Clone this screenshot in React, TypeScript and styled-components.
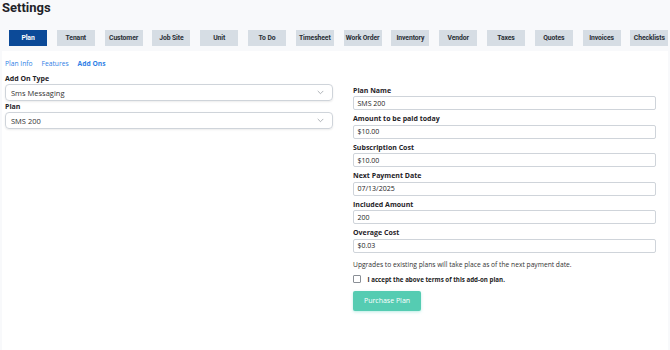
import React from "react";
import styled, { createGlobalStyle } from "styled-components";

const GlobalStyle = createGlobalStyle`
  html, body {
    margin: 0;
    padding: 0;
    background: #f8f9fb;
    font-family: "Open Sans", "Liberation Sans", sans-serif;
    color: #222;
  }
  * { box-sizing: border-box; }
`;

const tabs = [
  "Plan",
  "Tenant",
  "Customer",
  "Job Site",
  "Unit",
  "To Do",
  "Timesheet",
  "Work Order",
  "Inventory",
  "Vendor",
  "Taxes",
  "Quotes",
  "Invoices",
  "Checklists",
];

const fields = [
  { label: "Plan Name", value: "SMS 200" },
  { label: "Amount to be paid today", value: "$10.00" },
  { label: "Subscription Cost", value: "$10.00" },
  { label: "Next Payment Date", value: "07/13/2025" },
  { label: "Included Amount", value: "200" },
  { label: "Overage Cost", value: "$0.03" },
];

const Chevron = () => (
  <svg width="7" height="5" viewBox="0 0 7 5" fill="none">
    <path d="M1 1.2l2.5 2.5 2.5-2.5" stroke="#9aa0a6" strokeWidth="0.8" strokeLinecap="round" strokeLinejoin="round" />
  </svg>
);

const App = () => {
  return (
    <Page>
      <GlobalStyle />
      <Header>
        <Title>Settings</Title>
        <TabBar>
          {tabs.map((t) => (
            <Tab key={t} active={t === "Plan"}>
              {t}
            </Tab>
          ))}
        </TabBar>
      </Header>
      <Panel>
        <SubTabs>
          <SubTab>Plan Info</SubTab>
          <SubTab>Features</SubTab>
          <SubTab active>Add Ons</SubTab>
        </SubTabs>
        <Columns>
          <LeftCol>
            <Label>Add On Type</Label>
            <Select>
              <span>Sms Messaging</span>
              <Chevron />
            </Select>
            <Label>Plan</Label>
            <Select>
              <span>SMS 200</span>
              <Chevron />
            </Select>
          </LeftCol>
          <RightCol>
            {fields.map((f) => (
              <Field key={f.label}>
                <Label>{f.label}</Label>
                <Input>{f.value}</Input>
              </Field>
            ))}
            <Notice>Upgrades to existing plans will take place as of the next payment date.</Notice>
            <CheckRow>
              <Box />
              <CheckText>I accept the above terms of this add-on plan.</CheckText>
            </CheckRow>
            <Button>Purchase Plan</Button>
          </RightCol>
        </Columns>
      </Panel>
    </Page>
  );
};

export default App;

const Page = styled.div`
  width: 670px;
  height: 350px;
  display: flex;
  flex-direction: column;
  background: #f8f9fb;
  overflow: hidden;
`;

const Header = styled.div`
  height: 51px;
  padding: 0 0 0 2px;
`;

const Title = styled.div`
  font-family: Roboto, "Liberation Sans", sans-serif;
  font-weight: 700;
  font-size: 13px;
  line-height: 16px;
  color: #1f2328;
`;

const TabBar = styled.div`
  display: flex;
  gap: 9.8px;
  margin-top: 14px;
  padding-left: 7px;
`;

const Tab = styled.div<{ active?: boolean }>`
  width: 38px;
  height: 16px;
  flex: none;
  display: flex;
  align-items: center;
  justify-content: center;
  font-family: Roboto, "Liberation Sans", sans-serif;
  font-weight: 700;
  font-size: 6.8px;
  letter-spacing: -0.1px;
  white-space: nowrap;
  color: ${(p) => (p.active ? "#ffffff" : "#2a2f36")};
  background: ${(p) => (p.active ? "#0c4a98" : "#d6dde4")};
`;

const Panel = styled.div`
  flex: 1;
  margin-left: 2px;
  width: 666px;
  background: #ffffff;
  padding: 8px 12px 0 3px;
`;

const SubTabs = styled.div`
  display: flex;
  gap: 9px;
  height: 9px;
  align-items: center;
`;

const SubTab = styled.span<{ active?: boolean }>`
  font-size: 6.7px;
  color: #2f7fe6;
  font-weight: ${(p) => (p.active ? 700 : 400)};
`;

const Columns = styled.div`
  display: flex;
  gap: 20px;
  margin-top: 5.5px;
`;

const LeftCol = styled.div`
  width: 328px;
  display: flex;
  flex-direction: column;
`;

const RightCol = styled.div`
  flex: 1;
  display: flex;
  flex-direction: column;
  padding-top: 12px;
`;

const Label = styled.div`
  font-size: 7px;
  font-weight: 700;
  line-height: 9px;
  color: #1f2328;
  margin-bottom: 1.5px;
`;

const Select = styled.div`
  height: 17px;
  border: 1px solid #cfd4da;
  border-radius: 4px;
  box-shadow: 0 1px 2px rgba(0, 0, 0, 0.08);
  display: flex;
  align-items: center;
  justify-content: space-between;
  padding: 0 8px 0 5px;
  font-size: 7.5px;
  color: #333;
  margin-bottom: 0.5px;
`;

const Field = styled.div`
  display: flex;
  flex-direction: column;
  margin-bottom: 4px;
`;

const Input = styled.div`
  height: 14px;
  border: 1px solid #cfd4da;
  border-radius: 2px;
  display: flex;
  align-items: center;
  padding-left: 3.5px;
  font-size: 7px;
  color: #222;
`;

const Notice = styled.div`
  font-size: 6.7px;
  color: #333;
  margin-top: 3px;
  line-height: 9px;
`;

const CheckRow = styled.div`
  display: flex;
  align-items: center;
  gap: 6.5px;
  margin-top: 6px;
`;

const Box = styled.div`
  width: 8px;
  height: 8px;
  border: 1px solid #8a8f96;
  border-radius: 1px;
`;

const CheckText = styled.span`
  font-size: 6.2px;
  font-weight: 700;
  color: #222;
`;

const Button = styled.div`
  margin-top: 7px;
  width: 68px;
  height: 20px;
  display: flex;
  align-items: center;
  justify-content: center;
  background: #55ccb2;
  color: #ffffff;
  font-size: 7px;
  border-radius: 2px;
  box-shadow: 0 1px 3px rgba(60, 200, 180, 0.35);
`;
